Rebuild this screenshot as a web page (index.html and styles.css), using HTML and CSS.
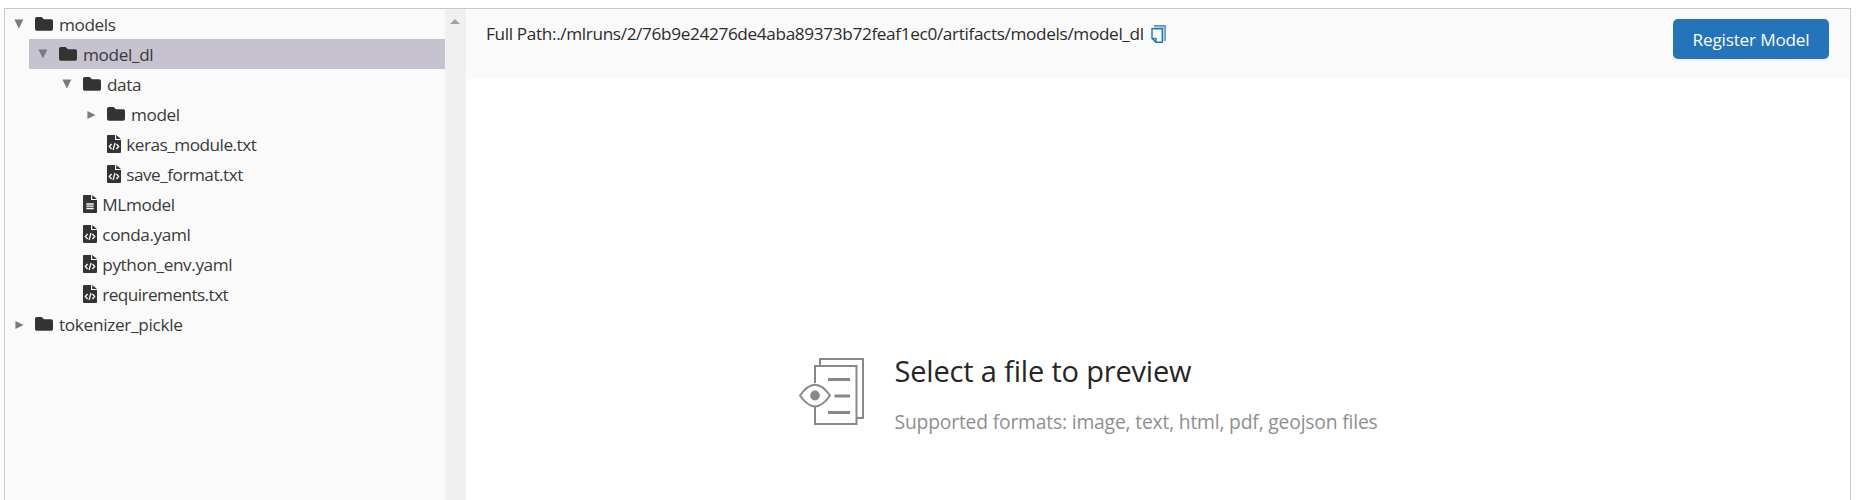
FILE: index.html
```html
<!DOCTYPE html>
<html lang="en">
<head>
<meta charset="utf-8">
<title>Artifacts</title>
<link rel="stylesheet" href="styles.css">
</head>
<body>
<svg class="sprites" width="0" height="0">
  <symbol id="folder" viewBox="0 0 18 14"><path d="M1.8 0H6.6L9 2.2H16.2Q18 2.2 18 4V12Q18 13.7 16.2 13.7H1.8Q0 13.7 0 12V1.8Q0 0 1.8 0Z"/></symbol>
  <symbol id="code" viewBox="0 0 14 18"><path d="M1 0H8V5H14V17Q14 18 13 18H1Q0 18 0 17V1Q0 0 1 0ZM9.2 0L14 4H9.2Z"/><path class="mark" d="M4.6 9L2.3 11.5L4.6 14M9.4 9L11.7 11.5L9.4 14M8 8L6.1 15"/></symbol>
  <symbol id="doc" viewBox="0 0 14 18"><path d="M1 0H8V5H14V17Q14 18 13 18H1Q0 18 0 17V1Q0 0 1 0ZM9.2 0L14 4H9.2Z"/><path class="mark" d="M3.3 9H10.7M3.3 11.2H10.7M3.3 13.5H10.7"/></symbol>
  <symbol id="down" viewBox="0 0 10 10"><path d="M0.4 0.5H9.4L4.9 9.5Z"/></symbol>
  <symbol id="right" viewBox="0 0 10 10"><path d="M0.5 0.5L9.5 5L0.5 9.5Z"/></symbol>
</svg>
<main class="artifacts">
  <nav class="tree">
    <div class="row"><svg class="toggle"><use href="#down"/></svg><svg class="folder"><use href="#folder"/></svg><span class="t-models">models</span></div>
    <div class="row level-1 selected"><svg class="toggle"><use href="#down"/></svg><svg class="folder"><use href="#folder"/></svg><span class="t-modeldl">model_dl</span></div>
    <div class="row level-2"><svg class="toggle"><use href="#down"/></svg><svg class="folder"><use href="#folder"/></svg><span class="t-data">data</span></div>
    <div class="row level-3"><svg class="toggle closed"><use href="#right"/></svg><svg class="folder"><use href="#folder"/></svg><span class="t-model">model</span></div>
    <div class="row level-3 leaf"><svg class="file"><use href="#code"/></svg><span class="t-keras">keras_module.txt</span></div>
    <div class="row level-3 leaf"><svg class="file"><use href="#code"/></svg><span class="t-save">save_format.txt</span></div>
    <div class="row level-2 leaf"><svg class="file"><use href="#doc"/></svg><span class="t-mlmodel">MLmodel</span></div>
    <div class="row level-2 leaf"><svg class="file"><use href="#code"/></svg><span class="t-conda">conda.yaml</span></div>
    <div class="row level-2 leaf"><svg class="file"><use href="#code"/></svg><span class="t-python">python_env.yaml</span></div>
    <div class="row level-2 leaf"><svg class="file"><use href="#code"/></svg><span class="t-req">requirements.txt</span></div>
    <div class="row"><svg class="toggle closed"><use href="#right"/></svg><svg class="folder"><use href="#folder"/></svg><span class="t-token">tokenizer_pickle</span></div>
  </nav>
  <div class="scrollbar"><svg width="10" height="5" viewBox="0 0 10 5"><path d="M0 5L5 0L10 5Z"/></svg></div>
  <section class="content">
    <header class="header">
      <div class="path"><span class="path-text">Full Path:./mlruns/2/76b9e24276de4aba89373b72feaf1ec0/artifacts/models/model_dl</span>
        <svg class="copy" viewBox="0 0 15 19"><path class="back" d="M3 1H14V16"/><path class="back-soft" d="M3 2.2H12.8V16"/><path class="front" d="M1 3.7H11.3V17.2H5L1 13.5ZM1 13.5H5V17.2"/></svg>
      </div>
      <button class="register"><span>Register Model</span></button>
    </header>
    <div class="preview">
      <svg class="preview-icon" width="66" height="68" viewBox="0 0 66 68"><path d="M21 8V1H64V60H58"/><path d="M16 46V66H57.5V8H16V25"/><path class="thick" d="M29 21.5H51M35.5 38H51M29 54.5H51"/><path class="eye" d="M1 37.5C11 23 21 23 31 37.5C21 52 11 52 1 37.5Z"/><ellipse cx="16" cy="37.5" rx="4.8" ry="5"/></svg>
      <div class="message">
        <div class="title">Select a file to preview</div>
        <div class="formats">Supported formats: image, text, html, pdf, geojson files</div>
      </div>
    </div>
  </section>
</main>
</body>
</html>
```

FILE: styles.css
```css
* { box-sizing: border-box; }
body {
  margin: 0;
  height: 500px;
  overflow: hidden;
  padding: 8px 20px 0 4px;
  background: #fff;
  color: #3a3a3a;
  font: 17.2px/30px "Open Sans", "Noto Sans", sans-serif;
}
.sprites { position: absolute; }
.artifacts {
  display: flex;
  height: 492px;
  border: 1px solid #c8c8c8;
  border-bottom: 0;
}
.tree { width: 440px; background: #fafafa; letter-spacing: -.4px; }
.row { display: flex; align-items: center; height: 30px; padding-left: 9px; white-space: nowrap; }
.row span { padding-top: 2px; }
.level-1 { margin-left: 24px; padding-left: 9px; }
.level-2 { margin-left: 48px; }
.level-3 { margin-left: 72px; }
.selected { background: #c6c2d0; }
.toggle { width: 10px; height: 10px; margin: 0 11px 1px 0; fill: #7b7b7b; }
.closed { width: 9px; height: 10px; margin: 1px 11px 0 1px; }
.folder { width: 18px; height: 14px; margin-right: 6px; fill: #333; }
.leaf { padding-left: 29.5px; }
.file { width: 14px; height: 18px; margin-right: 5.8px; fill: #333; }
.mark { fill: none; stroke: #fafafa; stroke-width: 1.3; }
.t-keras, .t-save { letter-spacing: -.5px; }
.t-modeldl { letter-spacing: -.35px; }
.t-req { letter-spacing: -.57px; }
.t-token { letter-spacing: -.3px; }
.scrollbar { width: 21px; background: #f0f0f0; padding: 9px 0 0 5px; line-height: 0; }
.scrollbar svg { fill: #a3a3a3; }
.content { flex: 1; display: flex; flex-direction: column; }
.header {
  display: flex;
  justify-content: space-between;
  align-items: flex-start;
  height: 70px;
  margin-right: 1px;
  padding: 7px 20px 0 20px;
  background: #fafafa;
}
.path { display: flex; align-items: flex-start; padding-top: 3px; color: #2c2c2c; white-space: nowrap; }
.path-text { width: 657px; letter-spacing: -.35px; }
.copy { width: 15px; height: 19px; margin: 6px 0 0 8px; fill: none; stroke: #2374bb; stroke-width: 1.4; }
.back-soft { stroke: #a9cbe6; }
.register {
  width: 156px;
  height: 40px;
  margin-top: 3px;
  padding: 2px 0 0;
  border: 0;
  border-radius: 5px;
  background: #2374bb;
  box-shadow: 0 2px 0 rgba(0, 0, 0, .04);
  color: #fff;
  font: inherit;
  letter-spacing: -.2px;
}
.preview { display: flex; padding: 279px 0 0 333px; }
.preview-icon { flex: none; fill: none; stroke: #888; stroke-width: 2; }
.thick { stroke-width: 2.8; }
.eye { fill: #fff; }
.preview-icon ellipse { fill: #888; stroke: none; }
.message { margin: -7px 0 0 29.5px; white-space: nowrap; }
.title { color: #262626; font-size: 29px; line-height: 40px; letter-spacing: -.18px; }
.formats { margin-top: 16px; color: #8f8f8f; font-size: 19.3px; line-height: 30px; letter-spacing: -.18px; }
```
